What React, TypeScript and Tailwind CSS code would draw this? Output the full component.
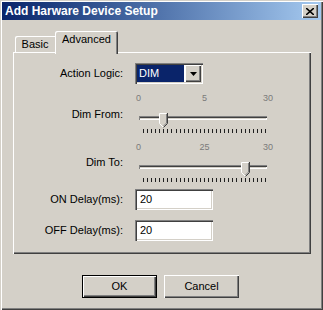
import React from 'react';

const raised =
  'bg-[#d4d0c8] shadow-[inset_1px_1px_#ffffff,inset_-1px_-1px_#404040,inset_-2px_-2px_#808080]';
const sunken =
  'shadow-[inset_1px_1px_#808080,inset_2px_2px_#404040,inset_-1px_-1px_#ffffff,inset_-2px_-2px_#d4d0c8]';

const Slider = ({ value, mid }: { value: number; mid: string }) => {
  const center = 8 + (value / 30) * 122;
  return (
    <div className="flex flex-col w-[138px]">
      <div className="grid grid-cols-[auto_1fr_auto] h-[12px] items-center text-[9px] leading-none text-[#7a7a7a]">
        <span className="pl-[1px]">0</span>
        <span className="text-center pl-[5px]">{mid}</span>
        <span>30</span>
      </div>
      <div className="relative mt-[8px] h-[16px]">
        <div className="mt-[4px] ml-[4px] w-[128px] h-[4px] bg-[#d4d0c8] shadow-[inset_1px_1px_#808080,inset_0_2px_#404040,inset_-1px_-1px_#ffffff]" />
        <svg
          className="absolute top-[1px]"
          style={{ left: center - 4 }}
          width="9"
          height="15"
          viewBox="0 0 9 15"
        >
          <polygon points="0,0 8,0 8,10 4,14 0,10" fill="#d4d0c8" />
          <path d="M0.5 10.5V0.5H7.5" stroke="#ffffff" fill="none" />
          <path d="M0.5 10.5L4.5 14.5" stroke="#ffffff" fill="none" />
          <path d="M8.5 0V10.5L4.5 14.5" stroke="#404040" fill="none" />
          <path d="M7.5 1V10L4.5 13" stroke="#808080" fill="none" />
        </svg>
      </div>
      <div className="mt-[1px] ml-[8px] w-[123px] h-[4px] flex justify-between">
        {Array.from({ length: 31 }).map((_, i) => (
          <div key={i} className="w-px h-[4px] bg-[#202020]" />
        ))}
      </div>
    </div>
  );
};

const App = () => {
  return (
    <div className="w-[323px] h-[310px] p-[2px] flex flex-col bg-[#d4d0c8] shadow-[inset_1px_1px_#d4d0c8,inset_2px_2px_#ffffff,inset_-1px_-1px_#404040,inset_-2px_-2px_#808080] font-['Liberation_Sans',Arial,sans-serif] text-[11px] text-black">
      {/* title bar */}
      <div className="h-[18px] flex items-center justify-between pl-[3px] pr-[3px] bg-linear-to-r from-[#0a246a] to-[#a6caf0]">
        <span className="text-white font-bold text-[12px] leading-none">Add Harware Device Setup</span>
        <div className={`w-[16px] h-[14px] flex items-center justify-center ${raised}`}>
          <svg width="8" height="7" viewBox="0 0 8 7">
            <path d="M0 0L8 7M8 0L0 7" stroke="#000" strokeWidth="1.6" />
          </svg>
        </div>
      </div>

      {/* tabs */}
      <div className="mt-[11px] ml-[11px] mr-[10px] flex flex-col">
        <div className="flex items-end h-[21px] pl-[2px] relative z-10">
          <div className="w-[40px] h-[16px] flex items-center justify-center pt-[1px] rounded-tl-[2px] shadow-[inset_1px_1px_#ffffff]">
            Basic
          </div>
          <div className="w-[63px] h-[23px] -mb-[2px] pb-[6px] flex items-center justify-center bg-[#d4d0c8] rounded-t-[2px] shadow-[inset_1px_1px_#ffffff,inset_-1px_0_#404040,inset_-2px_0_#808080]">
            Advanced
          </div>
        </div>
        <div className="h-[202px] pt-[11px] pl-[2px] flex flex-col shadow-[inset_1px_1px_#ffffff,inset_-1px_-1px_#404040,inset_-2px_-2px_#808080]">
          {/* action logic */}
          <div className="flex items-center h-[21px]">
            <div className="w-[108px] text-right">Action Logic:</div>
            <div className={`ml-[12px] w-[68px] h-[21px] p-[2px] flex bg-white ${sunken}`}>
              <div className="w-[47px] h-[17px] flex items-center pl-[2px] bg-[#0a246a] text-white">DIM</div>
              <div className={`ml-[1px] w-[16px] h-[17px] flex items-center justify-center ${raised}`}>
                <svg width="7" height="4" viewBox="0 0 7 4">
                  <polygon points="0,0 7,0 3.5,4" fill="#000" />
                </svg>
              </div>
            </div>
          </div>

          {/* dim from */}
          <div className="flex mt-[8px]">
            <div className="w-[108px] text-right pt-[16px] leading-[13px]">Dim From:</div>
            <div className="ml-[12px]">
              <Slider value={5} mid="5" />
            </div>
          </div>

          {/* dim to */}
          <div className="flex mt-[8px]">
            <div className="w-[108px] text-right pt-[15px] leading-[13px]">Dim To:</div>
            <div className="ml-[12px]">
              <Slider value={25} mid="25" />
            </div>
          </div>

          {/* delays */}
          <div className="flex items-center mt-[7px]">
            <div className="w-[108px] text-right">ON Delay(ms):</div>
            <div className={`ml-[12px] w-[78px] h-[21px] flex items-center pl-[5px] bg-white ${sunken}`}>20</div>
          </div>
          <div className="flex items-center mt-[10px]">
            <div className="w-[108px] text-right">OFF Delay(ms):</div>
            <div className={`ml-[12px] w-[78px] h-[21px] flex items-center pl-[5px] bg-white ${sunken}`}>20</div>
          </div>
        </div>
      </div>

      {/* buttons */}
      <div className="mt-[21px] flex justify-center gap-[7px] pr-[2px]">
        <div className="w-[75px] h-[23px] border border-black">
          <div className={`w-full h-full flex items-center justify-center ${raised}`}>OK</div>
        </div>
        <div className={`w-[75px] h-[23px] flex items-center justify-center ${raised}`}>Cancel</div>
      </div>
    </div>
  );
};

export default App;
